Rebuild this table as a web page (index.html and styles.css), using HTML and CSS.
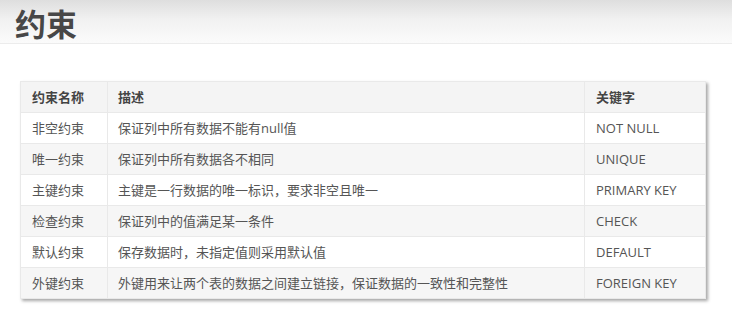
FILE: index.html
```html
<!DOCTYPE html>
<html lang="zh-CN">
<head>
<meta charset="utf-8">
<title>约束</title>
<link rel="stylesheet" href="styles.css">
</head>
<body>
<header class="page-head">
  <h1 class="title">约束</h1>
</header>
<main class="content">
  <table class="grid">
    <colgroup>
      <col class="c-name">
      <col class="c-desc">
      <col class="c-key">
    </colgroup>
    <thead>
      <tr><th>约束名称</th><th>描述</th><th>关键字</th></tr>
    </thead>
    <tbody>
      <tr><td>非空约束</td><td>保证列中所有数据不能有null值</td><td>NOT NULL</td></tr>
      <tr><td>唯一约束</td><td>保证列中所有数据各不相同</td><td>UNIQUE</td></tr>
      <tr><td>主键约束</td><td>主键是一行数据的唯一标识，要求非空且唯一</td><td>PRIMARY KEY</td></tr>
      <tr><td>检查约束</td><td>保证列中的值满足某一条件</td><td>CHECK</td></tr>
      <tr><td>默认约束</td><td>保存数据时，未指定值则采用默认值</td><td>DEFAULT</td></tr>
      <tr><td>外键约束</td><td>外键用来让两个表的数据之间建立链接，保证数据的一致性和完整性</td><td>FOREIGN KEY</td></tr>
    </tbody>
  </table>
</main>
</body>
</html>
```
FILE: styles.css
```css
html, body {
  margin: 0;
  padding: 0;
  background: #ffffff;
}
body {
  font-family: "Open Sans", "Noto Sans CJK SC", sans-serif;
  color: #555555;
  width: 732px;
  height: 321px;
  overflow: hidden;
}
.page-head {
  height: 43px;
  border-bottom: 1px solid #ececec;
  background: linear-gradient(to bottom, #dedede 0%, #f1f1f1 45%, #fbfbfb 100%);
  padding-left: 15px;
  box-sizing: content-box;
}
.title {
  margin: 0;
  font-family: "Noto Sans CJK SC", sans-serif;
  font-size: 31px;
  font-weight: 700;
  line-height: 45px;
  color: #474747;
  letter-spacing: 0;
}
.content {
  padding: 37px 0 0 20px;
}
.grid {
  border-collapse: collapse;
  width: 685px;
  table-layout: fixed;
  font-size: 13px;
  box-shadow: 2px 2px 3px rgba(0, 0, 0, 0.35);
}
.c-name { width: 87px; }
.c-desc { width: 477px; }
.c-key { width: 121px; }
.grid th,
.grid td {
  height: 31px;
  padding: 0 0 0 11px;
  box-sizing: border-box;
  text-align: left;
  border: 1px solid #e9e9e9;
  white-space: nowrap;
  font-family: "Open Sans", "Noto Sans CJK SC", sans-serif;
  line-height: 18px;
}
.grid th + th,
.grid td + td {
  padding-left: 10px;
}
.grid th:last-child,
.grid td:last-child {
  padding-left: 11px;
}
.grid th {
  font-weight: 700;
  color: #444444;
  background: #f4f4f4;
}
.grid tbody tr:nth-child(even) td {
  background: #f6f6f6;
}
.grid tbody tr:nth-child(odd) td {
  background: #ffffff;
}
```
